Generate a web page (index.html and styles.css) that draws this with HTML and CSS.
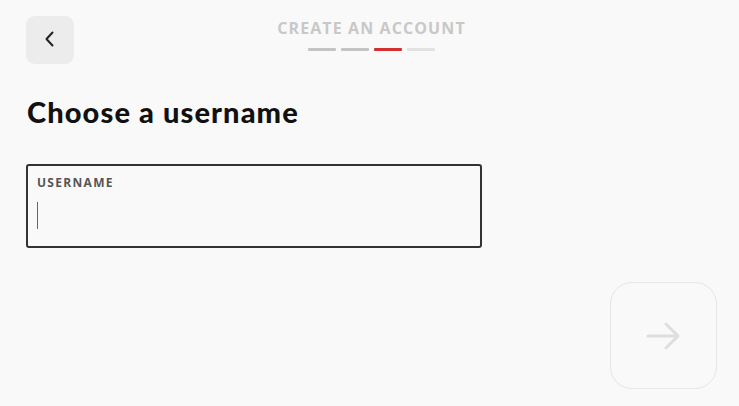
FILE: index.html
```html
<!DOCTYPE html>
<html>
<head>
<meta charset="utf-8">
<link rel="stylesheet" href="styles.css">
</head>
<body>
<div class="page">
  <header class="top">
    <button class="back" aria-label="Back">
      <svg width="14" height="16" viewBox="0 0 14 16"><path d="M9.5 1.5 L3.5 8 L9.5 14.5" fill="none" stroke="#222" stroke-width="2" stroke-linecap="round" stroke-linejoin="round"/></svg>
    </button>
    <div class="steps">
      <div class="steps-title">CREATE AN ACCOUNT</div>
      <div class="bars">
        <span class="bar done"></span>
        <span class="bar done"></span>
        <span class="bar current"></span>
        <span class="bar todo"></span>
      </div>
    </div>
  </header>
  <h1 class="heading">Choose a username</h1>
  <div class="field">
    <div class="field-label">USERNAME</div>
    <div class="cursor"></div>
  </div>
  <div class="footer">
    <button class="next" aria-label="Next">
      <svg width="36" height="32" viewBox="0 0 36 32"><path d="M2 16 H32 M20 4 L32 16 L20 28" fill="none" stroke="#dedede" stroke-width="3" stroke-linecap="round" stroke-linejoin="round"/></svg>
    </button>
  </div>
</div>
</body>
</html>
```
FILE: styles.css
```css
html, body {
  margin: 0;
  padding: 0;
  background: #f9f9f9;
  font-family: "Lato", "Noto Sans", sans-serif;
}
.page {
  width: 739px;
  height: 406px;
  box-sizing: border-box;
  padding: 16px 22px 0 26px;
  display: flex;
  flex-direction: column;
}
.top {
  position: relative;
  height: 48px;
  display: flex;
  justify-content: center;
}
.back {
  position: absolute;
  left: 0;
  top: 0;
  width: 48px;
  height: 48px;
  border: none;
  border-radius: 9px;
  background: #ececec;
  display: flex;
  align-items: center;
  justify-content: center;
  padding: 0;
}
.back svg { margin-left: -1px; margin-top: -2px; }
.steps {
  display: flex;
  flex-direction: column;
  align-items: center;
}
.steps-title {
  font-family: "Open Sans", "Noto Sans", sans-serif;
  font-weight: 700;
  font-size: 16px;
  letter-spacing: 1.1px;
  color: #c8c8c8;
  line-height: 22px;
  margin-top: 1px;
}
.bars {
  display: flex;
  gap: 5px;
  margin-top: 9px;
}
.bar {
  width: 28px;
  height: 3px;
  border-radius: 1px;
}
.bar.done { background: #c4c4c4; }
.bar.current { background: #d42f2f; }
.bar.todo { background: #e2e2e2; }
.heading {
  margin: 31px 0 0 1px;
  font-family: "Lato", sans-serif;
  font-weight: 900;
  font-size: 29px;
  line-height: 34px;
  color: #111;
  letter-spacing: 1.1px;
}
.field {
  margin-top: 35px;
  width: 456px;
  height: 84px;
  box-sizing: border-box;
  border: 2px solid #333;
  border-radius: 3px;
  padding: 9px 9px;
}
.field-label {
  font-family: "Open Sans", "Noto Sans", sans-serif;
  font-weight: 700;
  font-size: 12px;
  letter-spacing: 1.3px;
  color: #555;
  line-height: 16px;
}
.cursor {
  margin-top: 11px;
  width: 1px;
  height: 27px;
  background: #666;
}
.footer {
  display: flex;
  justify-content: flex-end;
  margin-top: 34px;
}
.next {
  width: 107px;
  height: 107px;
  box-sizing: border-box;
  border: 1px solid #e6e6e6;
  border-radius: 22px;
  background: #f9f9f9;
  display: flex;
  align-items: center;
  justify-content: center;
  padding: 0;
}
```
